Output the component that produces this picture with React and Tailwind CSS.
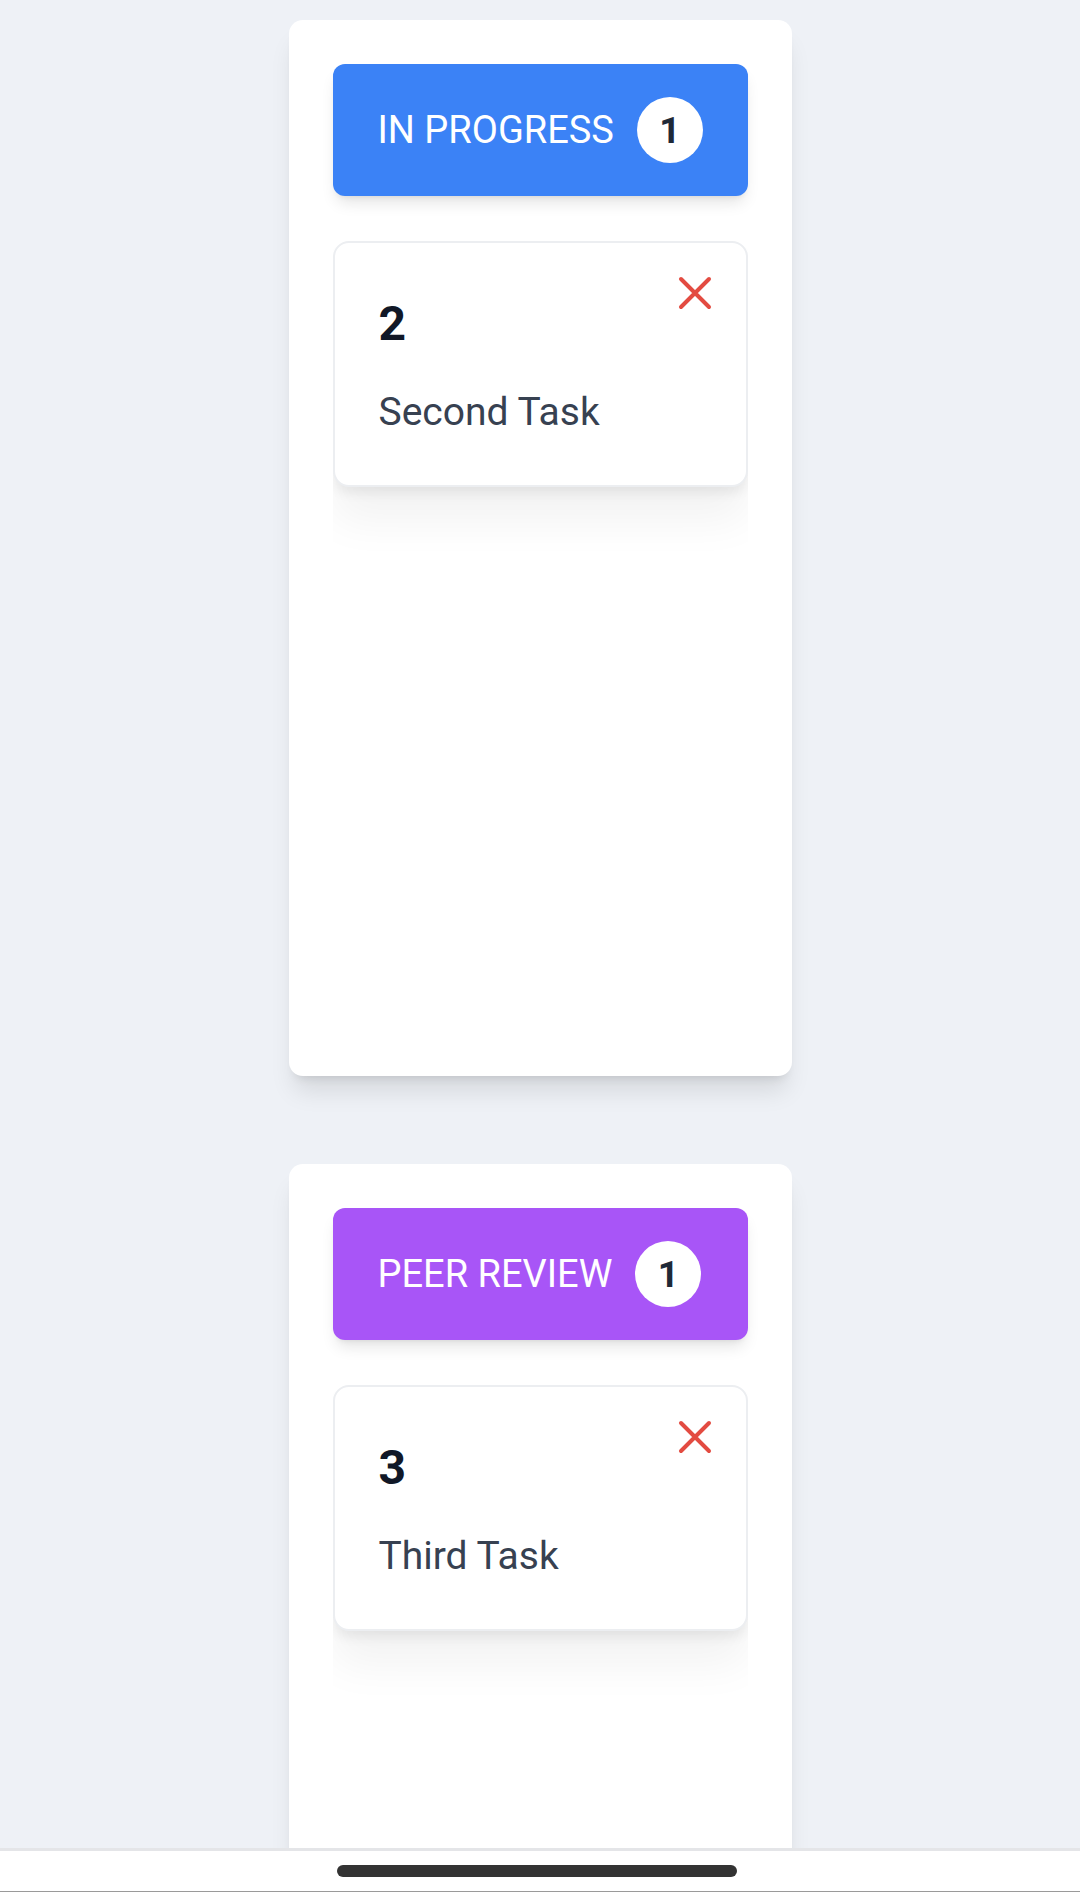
import React from "react";

const columns = [
  {
    title: "IN PROGRESS",
    headerClass: "bg-[#3b82f6]",
    count: 1,
    tasks: [{ id: 2, title: "Second Task" }],
  },
  {
    title: "PEER REVIEW",
    headerClass: "bg-[#a855f7]",
    count: 1,
    tasks: [{ id: 3, title: "Third Task" }],
  },
];

function CloseIcon() {
  return (
    <svg width="40" height="40" viewBox="0 0 40 40" fill="none">
      <path
        d="M6 6L34 34M34 6L6 34"
        stroke="#e34b41"
        strokeWidth="4"
        strokeLinecap="round"
      />
    </svg>
  );
}

function TaskCard({ task }) {
  return (
    <div className="relative rounded-2xl border-2 border-[#eceef1] bg-white pt-[45px] pb-[44px] px-[44px] shadow-[0_8px_12px_-2px_rgba(0,0,0,0.07),0_34px_44px_0_rgba(0,0,0,0.05)]">
      <button className="absolute top-[30px] right-[31px]" aria-label="Delete task">
        <CloseIcon />
      </button>
      <div className="text-[48px] leading-[72px] font-bold text-[#111827]">{task.id}</div>
      <div className="mt-6 text-[39px] leading-[57px] text-[#374151]">{task.title}</div>
    </div>
  );
}

function Column({ column }) {
  return (
    <div className="w-[503px] h-[1056px] shrink-0 rounded-[14px] bg-white p-[44px] shadow-xl flex flex-col">
      <div
        className={`h-[132px] shrink-0 rounded-xl ${column.headerClass} pl-[45px] pr-[44px] flex items-center gap-[23px] shadow-lg`}
      >
        <span className="text-[38px] leading-none text-white">{column.title}</span>
        <span className="w-[66px] h-[66px] rounded-full bg-white flex items-center justify-center text-[37px] leading-none font-bold text-[#1f2937]">
          {column.count}
        </span>
      </div>
      <div className="mt-[45px] flex-1 min-h-0 overflow-hidden flex flex-col gap-6">
        {column.tasks.map((t) => (
          <TaskCard key={t.id} task={t} />
        ))}
      </div>
    </div>
  );
}

export default function App() {
  return (
    <div className="h-[1892px] w-[1080px] overflow-hidden flex flex-col bg-[#eef1f6] font-['Roboto',sans-serif]">
      <main className="flex-1 min-h-0 overflow-hidden">
        <div className="flex flex-col items-center gap-[88px] pt-[20px]">
          {columns.map((c) => (
            <Column key={c.title} column={c} />
          ))}
        </div>
      </main>
      <div className="h-[44px] shrink-0 bg-white border-t-[3px] border-t-[#e4e5e8] border-b border-b-[#9a9a9a] flex items-center justify-center pr-[6px]">
        <div className="w-[400px] h-[12px] rounded-full bg-[#333333]" />
      </div>
    </div>
  );
}
